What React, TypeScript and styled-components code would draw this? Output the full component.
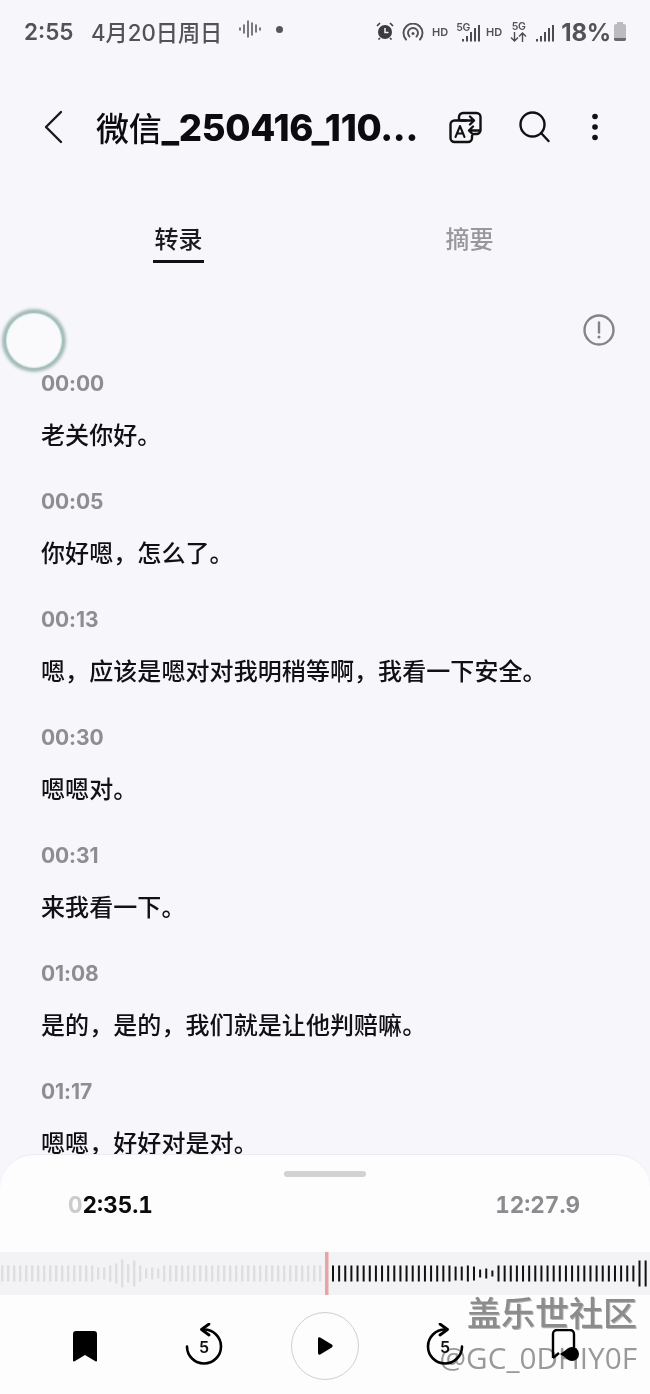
import React from "react";
import styled, { createGlobalStyle } from "styled-components";

const Global = createGlobalStyle`
  html, body { margin: 0; padding: 0; background: #f6f6fb; }
  * { box-sizing: border-box; }
`;

const CJK = `Inter, "Noto Sans CJK SC", "Noto Sans", sans-serif`;

const Screen = styled.div`
  position: relative;
  width: 650px;
  height: 1394px;
  overflow: hidden;
  display: flex;
  flex-direction: column;
  background: #f6f6fb;
  font-family: ${CJK};
`;

const StatusBar = styled.div`
  height: 64px;
  padding: 0 23px 0 24px;
  display: flex;
  align-items: center;
  color: #535356;
`;
const StatusClock = styled.span`
  font-size: 22.5px;
  font-weight: 600;
  width: 67px;
  margin-top: -1px;
`;
const StatusDate = styled.span`
  font-size: 22.2px;
  font-weight: 500;
  width: 148px;
  margin-top: -3px;
`;
const StatusSpacer = styled.div`
  flex: 1;
`;
const StatusRight = styled.div`
  display: flex;
  align-items: center;
`;
const Hd = styled.span<{ $l: number; $r: number }>`
  font-size: 11px;
  font-weight: 600;
  margin-left: ${(p) => p.$l}px;
  margin-right: ${(p) => p.$r}px;
`;
const Battery = styled.span`
  font-size: 24px;
  font-weight: 700;
  margin: 0 2px 0 7px;
  letter-spacing: -0.2px;
`;

const Header = styled.div`
  height: 62px;
  margin-top: 32px;
  padding: 0 0 0 44px;
  display: flex;
  align-items: center;
`;
const Title = styled.div`
  margin-left: 33px;
  width: 351px;
  font-size: 36.5px;
  font-weight: 800;
  color: #0c0c0e;
  white-space: nowrap;
  letter-spacing: -0.3px;
`;
const TitleCjk = styled.span`
  font-weight: 500;
  font-size: 33px;
`;
const IconSlot = styled.div<{ $l: number }>`
  margin-left: ${(p) => p.$l}px;
  display: flex;
`;

const Tabs = styled.div`
  margin-top: 56px;
  height: 56px;
  display: flex;
  position: relative;
`;
const Tab = styled.div<{ $active?: boolean; $l: number }>`
  margin-left: ${(p) => p.$l}px;
  width: 51px;
  height: 49px;
  display: flex;
  align-items: center;
  justify-content: center;
  font-size: 24px;
  font-weight: 500;
  white-space: nowrap;
  color: ${(p) => (p.$active ? "#1b1b1d" : "#98989c")};
  border-bottom: 3px solid ${(p) => (p.$active ? "#111" : "transparent")};
`;

const Content = styled.div`
  flex: 1;
  min-height: 0;
  overflow: hidden;
  padding: 45px 0 0 41px;
  position: relative;
`;
const InfoRow = styled.div`
  height: 55px;
  display: flex;
  justify-content: flex-end;
  padding-right: 35px;
  margin-top: -1px;
`;
const Entry = styled.div`
  height: 118px;
`;
const Stamp = styled.div`
  font-size: 21px;
  font-weight: 700;
  color: #8e8e92;
  line-height: 30px;
  height: 30px;
  letter-spacing: -0.1px;
`;
const Line = styled.div`
  margin-top: 20px;
  font-size: 24px;
  font-weight: 500;
  color: #111113;
  line-height: 34px;
  letter-spacing: 0.08px;
  white-space: nowrap;
`;

const AssistBall = styled.div`
  position: absolute;
  left: 6px;
  top: 313px;
  width: 56px;
  height: 55px;
  border-radius: 50%;
  background: #fafafd;
  border: 1px solid #d8ebe7;
  box-shadow: 0 0 0 1px #a9c2bd, 0 0 3px 4px #a3bab6;
`;

const Sheet = styled.div`
  height: 240px;
  flex: none;
  background: #fdfdfe;
  border-radius: 34px 34px 0 0;
  border-top: 1px solid #ececf0;
  display: flex;
  flex-direction: column;
  align-items: stretch;
`;
const Handle = styled.div`
  width: 82px;
  height: 6px;
  border-radius: 3px;
  background: #d2d2d5;
  margin: 16px auto 0;
`;
const Times = styled.div`
  display: flex;
  justify-content: space-between;
  padding: 0 70px 0 68px;
  margin-top: 13px;
  font-size: 22.5px;
  font-weight: 700;
  line-height: 30px;
  font-variant-numeric: tabular-nums;
`;
const Elapsed = styled.span`
  color: #0b0b0d;
`;
const Faded = styled.span`
  color: #cbcbce;
`;
const Total = styled.span`
  color: #8c8c90;
`;
const WaveBand = styled.div`
  margin-top: 32px;
  height: 43px;
  background: #f3f3f6;
  display: flex;
`;
const Controls = styled.div`
  flex: 1;
  position: relative;
  display: flex;
  align-items: center;
  padding: 3px 0 0 73px;
`;
const PlayCircle = styled.div`
  width: 68px;
  height: 68px;
  border-radius: 50%;
  border: 1px solid #cfcfd2;
  display: flex;
  align-items: center;
  justify-content: center;
  background: #fdfdfe;
  margin-left: 68px;
`;

const Watermark = styled.div`
  position: absolute;
  right: 13px;
  bottom: 16px;
  text-align: right;
  color: #8d8d8d;
  mix-blend-mode: multiply;
  pointer-events: none;
`;
const WmTop = styled.div`
  font-family: "Noto Sans CJK SC", sans-serif;
  font-size: 34px;
  line-height: 46px;
  font-weight: 500;
  margin-bottom: 3px;
  text-shadow: 1px 1px 0 #b9b9b9;
`;
const WmBottom = styled.div`
  font-family: "Open Sans", sans-serif;
  font-size: 29.7px;
  line-height: 40px;
  color: #9a9a9a;
`;

const S = "#111";

const WaveIcon = () => (
  <svg width="24" height="20" viewBox="0 0 24 20" fill="none" stroke="#5b5b5e" strokeWidth="1.6" strokeLinecap="round" style={{ marginTop: -6 }}>
    <path d="M1 9v2M5 6v8M9 2v16M13 4v12M17 6v7M21 9v2" />
  </svg>
);
const Dot = styled.span`
  width: 7px;
  height: 7px;
  border-radius: 50%;
  background: #55555a;
  margin: -6px 0 0 13px;
`;

const Alarm = () => (
  <svg width="18" height="18" viewBox="0 0 18 18" style={{ marginTop: -3 }}>
    <circle cx="9" cy="10" r="7" fill="#3c3c3f" />
    <path d="M9 6v4.5h3.5" stroke="#f6f6fb" strokeWidth="1.5" fill="none" />
    <path d="M1 4l3-3M17 4l-3-3M4 16l-1.5 1.5M14 16l1.5 1.5" stroke="#3c3c3f" strokeWidth="1.6" />
  </svg>
);
const Hotspot = () => (
  <svg width="22" height="18" viewBox="0 0 22 18" fill="none" stroke="#525255" strokeWidth="1.9" strokeLinecap="round" style={{ marginLeft: 8, marginTop: 0 }}>
    <path d="M4 16.5a9.5 9.5 0 1 1 14 0" />
    <path d="M7.5 13.5a5 5 0 1 1 7 0" />
    <circle cx="11" cy="10.5" r="1.5" fill="#525255" stroke="none" />
  </svg>
);
const Signal = () => (
  <svg width="18" height="18" viewBox="0 0 18 18" fill="#4c4c4f" style={{ marginTop: 2 }}>
    <rect x="0" y="15" width="2" height="2.5" />
    <rect x="4" y="12" width="2" height="5.5" />
    <rect x="8" y="8" width="2" height="9.5" />
    <rect x="12" y="4" width="2" height="13.5" />
    <rect x="16" y="1" width="2" height="16.5" />
  </svg>
);
const FiveG = styled.span`
  font-size: 10.5px;
  font-weight: 600;
  line-height: 10px;
  display: flex;
  flex-direction: column;
  align-items: center;
  letter-spacing: -0.3px;
`;
const FiveGTop = styled(FiveG)`
  margin-right: -8px;
  margin-top: -8px;
`;
const SignalGap = styled.span`
  width: 9px;
`;
const Arrows = () => (
  <svg width="17" height="10" viewBox="0 0 17 10" fill="none" stroke="#4c4c4f" strokeWidth="1.4">
    <path d="M4.5 0v9M1 5.5 4.5 9 8 5.5M12.5 10V1M9 4.5 12.5 1 16 4.5" />
  </svg>
);
const BatteryIcon = () => (
  <svg width="14" height="20" viewBox="0 0 14 20">
    <rect x="4" y="0" width="6" height="3" fill="#bcbcbf" />
    <rect x="1" y="2" width="12" height="17" rx="2" fill="#bcbcbf" />
    <path d="M1 16h12v1a2 2 0 0 1-2 2H3a2 2 0 0 1-2-2z" fill="#6a6a6d" />
  </svg>
);

const Back = () => (
  <svg width="19" height="34" viewBox="0 0 19 34" fill="none" stroke="#1a1a1c" strokeWidth="2.4" strokeLinecap="round" strokeLinejoin="round">
    <path d="M17 2 2 17l15 15" />
  </svg>
);
const Translate = () => (
  <svg width="33" height="33" viewBox="0 0 33 33" fill="none" stroke={S} strokeWidth="2.4" strokeLinecap="round" strokeLinejoin="round">
    <path d="M10 9V6a4 4 0 0 1 4-4h13.5a4 4 0 0 1 4 4v13a4 4 0 0 1-4 4H25" />
    <path d="M21 5.5 25 9.5l-4 4M25 9.5H12" />
    <path d="M17 9.5H5.5a4 4 0 0 0-4 4V27a4 4 0 0 0 4 4H19a4 4 0 0 0 4-4v-2" />
    <path d="M6.5 26l4.5-11 4.5 11M8 22.5h6" strokeWidth="2" />
    <path d="M24 15.5 20 19.5l4 4M20 19.5h11" />
  </svg>
);
const Search = () => (
  <svg width="31" height="32" viewBox="0 0 31 32" fill="none" stroke={S} strokeWidth="2.4" strokeLinecap="round">
    <circle cx="13.5" cy="13.5" r="12" />
    <path d="M22.5 22.5 29.5 30" />
  </svg>
);
const More = () => (
  <svg width="8" height="28" viewBox="0 0 8 28" fill={S}>
    <circle cx="4" cy="3.5" r="2.8" />
    <circle cx="4" cy="14" r="2.8" />
    <circle cx="4" cy="24.5" r="2.8" />
  </svg>
);
const Info = () => (
  <svg width="32" height="32" viewBox="0 0 32 32" fill="none" stroke="#848487" strokeWidth="2.4" strokeLinecap="round">
    <circle cx="16" cy="16" r="14.5" />
    <path d="M16 8.5v10" />
    <circle cx="16" cy="23" r="1.5" fill="#848487" stroke="none" />
  </svg>
);
const Bookmark = () => (
  <svg width="24" height="31" viewBox="0 0 24 31" fill="#000">
    <path d="M3 0h18a3 3 0 0 1 3 3v26.5a1 1 0 0 1-1.6.8L12 24l-10.4 6.3A1 1 0 0 1 0 29.5V3a3 3 0 0 1 3-3z" />
  </svg>
);
const Replay = ({ flip }: { flip?: boolean }) => (
  <svg width="38" height="42" viewBox="0 0 38 42" fill="none" stroke="#000" strokeWidth="2.6" strokeLinecap="round" strokeLinejoin="round" style={flip ? { transform: "scaleX(-1)" } : undefined}>
    <path d="M19 6.5A17 17 0 1 1 2 23.5" />
    <path d="M24 1 16.5 6.5 24 12" strokeWidth="2.8" />
  </svg>
);
const SkipWrap = styled.div<{ $l: number }>`
  position: relative;
  width: 38px;
  height: 42px;
  margin-left: ${(p) => p.$l}px;
  margin-top: -4px;
`;
const SkipNum = styled.span`
  position: absolute;
  left: 0;
  right: 0;
  top: 14px;
  text-align: center;
  font-size: 16px;
  font-weight: 600;
  color: #111;
  line-height: 20px;
`;
const Play = () => (
  <svg width="16" height="18" viewBox="0 0 16 18" fill="#000">
    <path d="M1 1.8C1 .6 2.2 0 3.2.6l11.6 7a1.6 1.6 0 0 1 0 2.8l-11.6 7C2.2 18 1 17.4 1 16.2z" />
  </svg>
);
const AddMark = () => (
  <svg width="30" height="34" viewBox="0 0 30 34" fill="none" style={{ marginLeft: 87 }}>
    <path d="M2 29V5a4 4 0 0 1 4-4h13a4 4 0 0 1 4 4v14" stroke="#000" strokeWidth="2.4" />
    <path d="M2 29l6-5" stroke="#000" strokeWidth="2.4" />
    <circle cx="21" cy="25" r="7" fill="#000" />
    <path d="M9 25l8-5.5v11z" fill="#000" />
  </svg>
);

const tallLeft: Record<number, number> = { 16: 12, 17: 12, 18: 16, 19: 20, 20: 28, 21: 18, 22: 26, 23: 16, 24: 10, 25: 12, 26: 10 };
const tallRight: Record<number, number> = { 20: 14, 21: 14, 22: 16, 23: 14, 24: 8, 25: 10, 26: 6, 27: 16, 50: 26, 51: 26 };

const Wave = () => {
  const left = Array.from({ length: 54 }, (_, i) => ({ x: 1 + i * 6, h: tallLeft[i] ?? 16 }));
  const right = Array.from({ length: 52 }, (_, i) => ({ x: 332 + i * 6.13, h: tallRight[i] ?? 16 }));
  return (
    <svg width="650" height="43" viewBox="0 0 650 43">
      {left.map((b) => (
        <rect key={`l${b.x}`} x={b.x} y={21.5 - b.h / 2} width="2.4" height={b.h} fill="#dededf" />
      ))}
      <rect x="325" y="0" width="3.5" height="43" fill="#e8a3a3" />
      {right.map((b) => (
        <rect key={`r${b.x}`} x={b.x} y={21.5 - b.h / 2} width="2" height={b.h} fill="#111113" />
      ))}
    </svg>
  );
};

const entries = [
  ["00:00", "老关你好。"],
  ["00:05", "你好嗯，怎么了。"],
  ["00:13", "嗯，应该是嗯对对我明稍等啊，我看一下安全。"],
  ["00:30", "嗯嗯对。"],
  ["00:31", "来我看一下。"],
  ["01:08", "是的，是的，我们就是让他判赔嘛。"],
  ["01:17", "嗯嗯，好好对是对。"],
];

export default function App() {
  return (
    <Screen>
      <Global />
      <StatusBar>
        <StatusClock>2:55</StatusClock>
        <StatusDate>4月20日周日</StatusDate>
        <WaveIcon />
        <Dot />
        <StatusSpacer />
        <StatusRight>
          <Alarm />
          <Hotspot />
          <Hd $l={8} $r={8}>HD</Hd>
          <FiveGTop>5G</FiveGTop>
          <Signal />
          <Hd $l={6} $r={8}>HD</Hd>
          <FiveG>5G<Arrows /></FiveG>
          <SignalGap />
          <Signal />
          <Battery>18%</Battery>
          <BatteryIcon />
        </StatusRight>
      </StatusBar>
      <Header>
        <Back />
        <Title><TitleCjk>微信</TitleCjk>_250416_110...</Title>
        <IconSlot $l={2}><Translate /></IconSlot>
        <IconSlot $l={37}><Search /></IconSlot>
        <IconSlot $l={41}><More /></IconSlot>
      </Header>
      <Tabs>
        <Tab $active $l={153}>转录</Tab>
        <Tab $l={240}>摘要</Tab>
      </Tabs>
      <Content>
        <InfoRow><Info /></InfoRow>
        {entries.map(([t, s]) => (
          <Entry key={t}>
            <Stamp>{t}</Stamp>
            <Line>{s}</Line>
          </Entry>
        ))}
      </Content>
      <AssistBall />
      <Sheet>
        <Handle />
        <Times>
          <Elapsed><Faded>0</Faded>2:35.1</Elapsed>
          <Total>12:27.9</Total>
        </Times>
        <WaveBand><Wave /></WaveBand>
        <Controls>
          <Bookmark />
          <SkipWrap $l={88}><Replay /><SkipNum>5</SkipNum></SkipWrap>
          <PlayCircle><Play /></PlayCircle>
          <SkipWrap $l={67}><Replay flip /><SkipNum>5</SkipNum></SkipWrap>
          <AddMark />
        </Controls>
      </Sheet>
      <Watermark>
        <WmTop>盖乐世社区</WmTop>
        <WmBottom>@GC_0DHIY0F</WmBottom>
      </Watermark>
    </Screen>
  );
}
